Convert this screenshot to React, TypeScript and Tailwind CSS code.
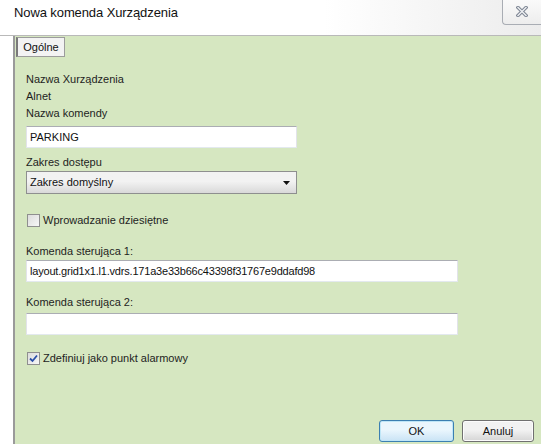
import React from "react";

const font = { fontFamily: '"Liberation Sans", Arial, sans-serif' };

function Label({ text, className = "" }: { text: string; className?: string }) {
  return <div className={`h-4 leading-4 text-[11px] text-[#1e1e1e] ${className}`}>{text}</div>;
}

function TextBox({ value, width, className = "" }: { value: string; width: string; className?: string }) {
  return (
    <div
      className={`h-[22px] ${width} border border-t-[#abadb3] border-x-[#e2e3ea] border-b-[#e3e9ef] bg-white pl-[3px] text-[11px] leading-5 text-[#111] ${className}`}
    >
      {value}
    </div>
  );
}

function CheckBox({ checked }: { checked: boolean }) {
  return (
    <div className="flex h-[13px] w-[13px] items-center justify-center border border-[#8f8f8f] bg-gradient-to-br from-[#dcdcdc] to-[#f7f7f7]">
      {checked ? (
        <svg width="9" height="9" viewBox="0 0 9 9">
          <path d="M1 4.5 L3.5 7 L8 1.5" fill="none" stroke="#2a4fa8" strokeWidth="1.8" />
        </svg>
      ) : null}
    </div>
  );
}

function CloseGlyph() {
  return (
    <svg width="12" height="11" viewBox="0 0 12 11">
      <path d="M2 1.5 L10 9.5 M10 1.5 L2 9.5" stroke="#7d8593" strokeWidth="3.4" strokeLinecap="square" />
      <path d="M2 1.5 L10 9.5 M10 1.5 L2 9.5" stroke="#eef0f3" strokeWidth="1.4" strokeLinecap="square" />
    </svg>
  );
}

export default function App() {
  return (
    <div className="flex h-[444px] w-[541px] flex-col overflow-hidden bg-white" style={font}>
      {/* caption bar */}
      <div className="relative flex h-9 shrink-0 items-start border-b border-[#b9b9b9] bg-gradient-to-r from-white from-60% to-[#ececec] pl-[14px]">
        <span className="mt-[5px] text-[13px] leading-4 tracking-[-0.1px] text-[#111]">Nowa komenda Xurządzenia</span>
        <div className="absolute right-0 top-[-2px] flex h-[27px] w-[39px] items-center justify-center rounded-bl-[4px] border border-t-0 border-r-0 border-[#a9adb4] bg-gradient-to-b from-[#fbfbfb] to-[#ededed]">
          <CloseGlyph />
        </div>
      </div>

      {/* dialog body */}
      <div className="flex flex-1 bg-white pl-[13px]">
        <div className="flex flex-1 flex-col border-l-2 border-[#9a9a9a] bg-[#d6e7c1]">
          <div className="mt-px flex">
            <div className="ml-px flex h-5 w-[49px] items-center justify-center border border-[#9c9c9c] border-l-2 border-l-[#7a7a7a] bg-[#f3f3f3] text-[11px] text-[#111]">
              Ogólne
            </div>
          </div>

          <div className="flex flex-1 flex-col pl-[11px]">
            <Label text="Nazwa Xurządzenia" className="mt-[14px]" />
            <Label text="Alnet" className="mt-px" />
            <Label text="Nazwa komendy" className="mt-px" />
            <TextBox value="PARKING" width="w-[271px]" className="mt-[5px]" />
            <Label text="Zakres dostępu" className="mt-[6px]" />
            <div className="mt-px flex h-[23px] w-[271px] items-center justify-between border border-[#8e8f8f] bg-gradient-to-b from-[#f2f2f2] from-45% to-[#d9d9d9] pl-[3px] pr-[6px] text-[11px] text-[#111]">
              <span>Zakres domyślny</span>
              <svg width="7" height="4" viewBox="0 0 7 4">
                <path d="M0 0 H7 L3.5 4 Z" fill="#111" />
              </svg>
            </div>

            <div className="mt-[18px] flex h-4 items-center gap-[3px] pl-px">
              <CheckBox checked={false} />
              <span className="text-[11px] text-[#1e1e1e]">Wprowadzanie dziesiętne</span>
            </div>

            <Label text="Komenda sterująca 1:" className="mt-[15px]" />
            <TextBox
              value="layout.grid1x1.l1.vdrs.171a3e33b66c43398f31767e9ddafd98"
              width="w-[432px]"
              className="mt-px tracking-[-0.2px]"
            />
            <Label text="Komenda sterująca 2:" className="mt-3" />
            <TextBox value="" width="w-[432px]" className="mt-[3px]" />

            <div className="mt-[15px] flex h-4 items-center gap-[3px] pl-px">
              <CheckBox checked={true} />
              <span className="text-[11px] text-[#1e1e1e]">Zdefiniuj jako punkt alarmowy</span>
            </div>

            <div className="flex-1" />

            <div className="mb-[2px] flex justify-end gap-2 pr-[7px]">
              <button className="h-[22px] w-[75px] rounded-[3px] border border-[#3c7fb1] bg-gradient-to-b from-[#eaf6fd] from-45% to-[#c9e3f5] text-[11px] text-[#111] shadow-[inset_0_0_0_1px_#bfe6f7]">
                OK
              </button>
              <button className="h-[22px] w-[72px] rounded-[3px] border border-[#707070] bg-gradient-to-b from-[#f2f2f2] from-45% to-[#d5d5d5] text-[11px] text-[#111] shadow-[inset_0_0_0_1px_#fcfcfc]">
                Anuluj
              </button>
            </div>
          </div>
        </div>
      </div>
    </div>
  );
}
